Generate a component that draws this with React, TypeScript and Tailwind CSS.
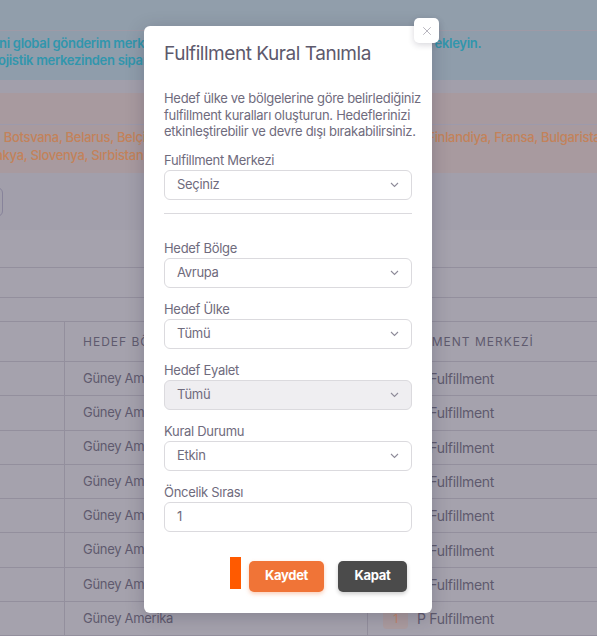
import { X } from "lucide-react";

const rows = Array.from({ length: 8 });

function Chevron() {
  return (
    <svg width="9" height="6" viewBox="0 0 9 6" fill="none" stroke="#8e8b99" strokeWidth="1.1">
      <path d="M1 1l3.5 3.5L8 1" />
    </svg>
  );
}

function Field({
  label,
  value,
  disabled,
  input,
}: {
  label: string;
  value: string;
  disabled?: boolean;
  input?: boolean;
}) {
  return (
    <div className="flex flex-col">
      <label className="mb-[1px] text-[13px] leading-[18px] text-[#6f6b7d]">{label}</label>
      <div
        className={`flex h-[30px] items-center justify-between rounded-[6px] border border-[#dbdade] pl-[12px] pr-[12px] text-[13px] text-[#6f6b7d] ${
          disabled ? "bg-[#efeef1]" : "bg-white"
        }`}
      >
        <span>{value}</span>
        {!input && <Chevron />}
      </div>
    </div>
  );
}

export default function App() {
  return (
    <div className="relative h-[636px] w-[597px] overflow-hidden bg-[#a29fab] font-[Inter,sans-serif] tracking-[-0.3px]">
      {/* dimmed page behind the dialog */}
      <div className="h-[30px] bg-[#919eab]" />
      <div className="h-[50px] border-t border-[#9e9aa6] bg-[#8f9dab] pt-[4px] text-[13px] font-semibold leading-[17px] text-[#3196ad]">
        <p className="-ml-[16px] whitespace-nowrap">
          Yeni global gönderim merkezinizi tanımlamak için aşağıdan hemen bir kayıt ekleyin.
        </p>
        <p className="-ml-[9px] whitespace-nowrap">Lojistik merkezinden siparişler atanır.</p>
      </div>
      <div className="h-[13px]" />
      <div className="h-[80px] bg-[#a89a9f] text-[13px] font-medium leading-[18px] text-[#c3825a]">
        <div className="h-[32px] border-b border-[#9d9aab]" />
        <div className="pt-[3px]">
          <p className="-ml-[3px] whitespace-nowrap">
            , Botsvana, Belarus, Belçika, Bosna-Hersek, Çekya, Danimarka, Estonya, Finlandiya, Fransa, Bulgaristan, Hırvatistan
          </p>
          <p className="-ml-[30px] whitespace-nowrap">Slovakya, Slovenya, Sırbistan</p>
        </div>
      </div>
      <div className="flex h-[57px] items-center">
        <div className="-ml-[10px] h-[30px] w-[13px] rounded-[6px] border border-[#87839a]" />
      </div>
      <div className="bg-[#a5a2ad]">
        <div className="h-[38px] border-b border-[#938f9d]" />
        <div className="h-[30px] border-b border-[#938f9d]" />
        <div className="h-[24px] border-b border-[#938f9d]" />
        <div className="flex h-[40px] border-b border-[#938f9d] text-[12px] tracking-[1px] text-[#5f5a6e]">
          <div className="w-[65px] border-r border-[#938f9d]" />
          <div className="flex w-[303px] items-center border-r border-[#938f9d] pl-[18px]">HEDEF BÖLGE</div>
          <div className="flex flex-1 items-center pl-[10px]">FULFILLMENT MERKEZİ</div>
        </div>
        {rows.map((_, i) => (
          <div key={i} className="flex h-[34.3px] border-b border-[#938f9d] text-[13px] text-[#5f5a6e]">
            <div className="w-[65px] border-r border-[#938f9d]" />
            <div className="flex w-[303px] items-center border-r border-[#938f9d] pl-[18px]">Güney Amerika</div>
            <div className="flex flex-1 items-center gap-[9px] pl-[15px]">
              <span className="flex h-[21px] w-[25px] items-center justify-center rounded-[4px] bg-[#ac9c9f] text-[12px] text-[#c4866a]">
                1
              </span>
              <span className="text-[14px]">P Fulfillment</span>
            </div>
          </div>
        ))}
      </div>

      {/* dialog */}
      <div className="absolute left-[144px] top-[26px] z-10 w-[288px] rounded-[6px] bg-white px-[20px] pb-[21px] pt-[13px] shadow-[0_4px_18px_rgba(40,36,60,0.25)]">
        <button className="absolute -right-[7px] -top-[8px] flex h-[25px] w-[25px] items-center justify-center rounded-[5px] bg-white text-[#a8a6b0] shadow-[0_2px_6px_rgba(40,36,60,0.18)]">
          <X size={14} strokeWidth={1.4} />
        </button>
        <h2 className="text-[19px] font-normal leading-[30px] tracking-[-0.45px] text-[#5d596c]">Fulfillment Kural Tanımla</h2>
        <p className="mt-[21px] whitespace-nowrap text-[13px] leading-[16.5px] text-[#6f6b7d]">
          Hedef ülke ve bölgelerine göre belirlediğiniz
          <br />
          fulfillment kuralları oluşturun. Hedeflerinizi
          <br />
          etkinleştirebilir ve devre dışı bırakabilirsiniz.
        </p>
        <div className="mt-[11px]">
          <Field label="Fulfillment Merkezi" value="Seçiniz" />
        </div>
        <div className="mt-[13px] border-t border-[#dbdade]" />
        <div className="mt-[25px] flex flex-col gap-[12px]">
          <Field label="Hedef Bölge" value="Avrupa" />
          <Field label="Hedef Ülke" value="Tümü" />
          <Field label="Hedef Eyalet" value="Tümü" disabled />
          <Field label="Kural Durumu" value="Etkin" />
          <Field label="Öncelik Sırası" value="1" input />
        </div>
        <div className="mt-[29px] flex items-start justify-end pr-[5px]">
          <div className="-mt-[4px] h-[32px] w-[11px] bg-[#ff5a00]" />
          <button className="ml-[8px] h-[31px] w-[75px] rounded-[5px] bg-[#f07437] text-[13px] font-bold text-white shadow-[0_2px_4px_rgba(240,116,55,0.35)]">
            Kaydet
          </button>
          <button className="ml-[14px] h-[31px] w-[69px] rounded-[5px] bg-[#4b4b4b] text-[13px] font-bold text-white shadow-[0_2px_4px_rgba(0,0,0,0.2)]">
            Kapat
          </button>
        </div>
      </div>
    </div>
  );
}
